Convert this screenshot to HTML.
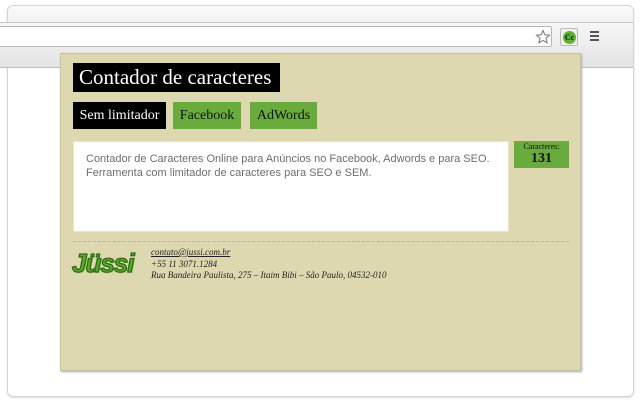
<!DOCTYPE html>
<html><head><meta charset="utf-8"><style>
*{margin:0;padding:0;box-sizing:border-box}
body{width:640px;height:400px;background:#fff;position:relative;overflow:hidden;font-family:"Liberation Serif",serif}
.win{position:absolute;left:7px;top:5px;width:627px;height:392px;border:1px solid #d4d4d4;border-radius:6px;background:#fff;box-shadow:0 1px 2px #ddd}
.top{position:absolute;left:8px;top:6px;width:625px;height:16px;background:linear-gradient(#fafafa,#f3f3f3);border-radius:6px 6px 0 0}
.tool{position:absolute;left:0;top:22px;width:633px;height:46px;background:linear-gradient(#f6f6f6,#e4e4e4);border-top:1px solid #c8c8c8;border-bottom:1px solid #bdbdbd}
.addr{position:absolute;left:0;top:26px;width:552px;height:21px;background:#fff;border:1px solid #b8b8b8;border-left:none;border-radius:0 2px 2px 0}
.ext{position:absolute;left:560px;top:28px;width:18px;height:18px;border:1px solid #bbb;border-radius:2px;background:#f0f0f0}
.ext div{position:absolute;left:2px;top:2px;width:13px;height:13px;border-radius:50%;background:#5fb234;font:bold 8px "Liberation Serif",serif;color:#111;text-align:center;line-height:13px}
.menu{position:absolute;left:590px;top:31px;width:9px}
.menu i{display:block;height:2px;background:#555;margin-bottom:2px}
.pop{position:absolute;left:60px;top:53px;width:521px;height:318px;background:#ddd8b0;border:1px solid #c9c49e;box-shadow:1px 1px 2px #aaa}
.title{position:absolute;left:12px;top:9px;width:207px;height:29px;background:#000;color:#fff;font-size:21px;line-height:29px;padding-left:6px}
.tab{position:absolute;top:48px;height:27px;font-size:14px;line-height:27px;text-align:center}
.ta{position:absolute;left:12px;top:87px;width:436px;height:91px;background:#fff;border:1px solid #e8e4c8;font:11px/14px "Liberation Sans",sans-serif;color:#6e6e6e;padding:10px 12px;white-space:nowrap}
.cnt{position:absolute;left:453px;top:87px;width:55px;height:27px;background:#6aab3e;text-align:center;color:#111}
.cnt .a{font-size:8px;line-height:10px;padding-top:1px}
.cnt .b{font-size:14px;font-weight:bold;line-height:14px}
.dash{position:absolute;left:12px;top:187px;width:496px;border-top:1px dashed #b9b497}
.logo{position:absolute;left:11px;top:194px;font:italic bold 26px "Liberation Sans",sans-serif;color:#5aab2c;-webkit-text-stroke:1.3px #2e6b13;letter-spacing:-1px;text-shadow:1px 1px 0 #9ccf6a}
.info{position:absolute;left:90px;top:193px;font:italic 9px/11.7px "Liberation Serif",serif;color:#222}
</style></head><body>
<div class="win"></div>
<div class="top"></div>
<div class="tool"></div>
<div class="addr"></div>
<svg style="position:absolute;left:535px;top:29px" width="16" height="16" viewBox="0 0 16 16"><path d="M8 1.5l1.9 4.3 4.6.4-3.5 3 1.1 4.6L8 11.4l-4.1 2.4 1.1-4.6-3.5-3 4.6-.4z" fill="#fff" stroke="#777" stroke-width="1"/></svg>
<div class="ext"><div>Cc</div></div>
<div class="menu"><i></i><i></i><i></i></div>
<div class="pop">
<div class="title">Contador de caracteres</div>
<div class="tab" style="left:12px;width:93px;background:#000;color:#fff">Sem limitador</div>
<div class="tab" style="left:112px;width:68px;background:#6aab3e;color:#111">Facebook</div>
<div class="tab" style="left:189px;width:67px;background:#6aab3e;color:#111">AdWords</div>
<div class="ta">Contador de Caracteres Online para Anúncios no Facebook, Adwords e para SEO.<br>Ferramenta com limitador de caracteres para SEO e SEM.</div>
<div class="cnt"><div class="a">Caracteres:</div><div class="b">131</div></div>
<div class="dash"></div>
<div class="logo">Jüssi</div>
<div class="info"><u>contato@jussi.com.br</u><br>+55 11 3071.1284<br>Rua Bandeira Paulista, 275 – Itaim Bibi – São Paulo, 04532-010</div>
</div>
</body></html>
